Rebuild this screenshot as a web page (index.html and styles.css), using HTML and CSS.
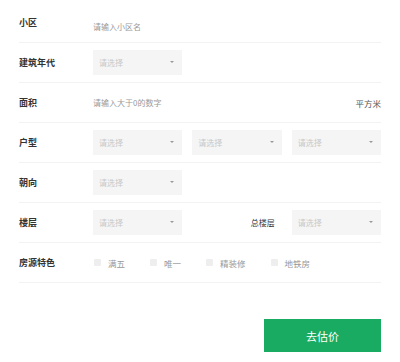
FILE: index.html
```html
<!DOCTYPE html>
<html lang="zh-CN">
<head>
    <meta charset="UTF-8">
    <meta name="viewport" content="width=device-width, initial-scale=1.0">
    <title>估价</title>
    <link rel="stylesheet" href="styles.css">
</head>
<body>
    <form class="estimate" id="estimateForm">
        <div class="row">
            <label class="label">小区</label>
            <div class="field">
                <input class="text-input" type="text" placeholder="请输入小区名">
            </div>
        </div>

        <div class="row">
            <label class="label">建筑年代</label>
            <div class="field grid3">
                <div class="select">请选择<span class="arrow"></span></div>
            </div>
        </div>

        <div class="row">
            <label class="label">面积</label>
            <div class="field field-unit">
                <input class="text-input" type="text" placeholder="请输入大于0的数字">
                <span class="unit">平方米</span>
            </div>
        </div>

        <div class="row">
            <label class="label">户型</label>
            <div class="field grid3">
                <div class="select">请选择<span class="arrow"></span></div>
                <div class="select">请选择<span class="arrow"></span></div>
                <div class="select">请选择<span class="arrow"></span></div>
            </div>
        </div>

        <div class="row">
            <label class="label">朝向</label>
            <div class="field grid3">
                <div class="select">请选择<span class="arrow"></span></div>
            </div>
        </div>

        <div class="row">
            <label class="label">楼层</label>
            <div class="field grid3">
                <div class="select">请选择<span class="arrow"></span></div>
                <span class="sub-label">总楼层</span>
                <div class="select">请选择<span class="arrow"></span></div>
            </div>
        </div>

        <div class="row">
            <label class="label">房源特色</label>
            <div class="field checks">
                <label class="check"><span class="box"></span>满五</label>
                <label class="check"><span class="box"></span>唯一</label>
                <label class="check"><span class="box"></span>精装修</label>
                <label class="check"><span class="box"></span>地铁房</label>
            </div>
        </div>

        <div class="actions">
            <button type="submit" class="submit">去估价</button>
        </div>
    </form>
</body>
</html>
```

FILE: styles.css
```css
body {
    margin: 0;
    padding: 0;
    background-color: #ffffff;
    font-family: 'Noto Sans CJK SC', 'Noto Sans', sans-serif;
    color: #333;
}

.estimate {
    padding: 3px 19px 0;
}

.row {
    display: flex;
    align-items: center;
    height: 39px;
    border-bottom: 1px solid #f2f2f2;
}

.label {
    width: 74px;
    flex-shrink: 0;
    font-size: 9px;
    font-weight: bold;
    color: #333;
}

.field {
    flex: 1;
}

.text-input {
    border: none;
    outline: none;
    padding: 0;
    width: 160px;
    font-family: inherit;
    font-size: 8px;
    color: #333;
    background: transparent;
}

.text-input::placeholder {
    color: #999;
}

.field-unit {
    display: flex;
    align-items: center;
    justify-content: space-between;
}

.unit {
    font-size: 8.5px;
    color: #555;
}

.grid3 {
    display: grid;
    grid-template-columns: 1fr 1fr 1fr;
    column-gap: 10px;
    align-items: center;
}

.select {
    position: relative;
    height: 25px;
    line-height: 25px;
    padding-left: 6px;
    background-color: #f5f5f5;
    font-size: 8px;
    color: #c8c8c8;
}

.arrow {
    position: absolute;
    right: 8px;
    top: 11px;
    width: 0;
    height: 0;
    border-left: 2px solid transparent;
    border-right: 2px solid transparent;
    border-top: 2px solid #999;
}

.sub-label {
    text-align: right;
    padding-right: 7px;
    font-size: 8px;
    color: #333;
}

.checks {
    display: flex;
    align-items: center;
    gap: 24px;
}

.check {
    display: flex;
    align-items: center;
    font-size: 8.5px;
    color: #999;
}

.box {
    width: 7px;
    height: 7px;
    margin: 0 7px 0 1px;
    background-color: #eeeeee;
    border-radius: 1px;
}

.actions {
    display: flex;
    justify-content: flex-end;
    margin-top: 36px;
}

.submit {
    width: 117px;
    height: 33px;
    border: none;
    background-color: #1aab62;
    color: #ffffff;
    font-family: inherit;
    font-size: 11px;
    cursor: pointer;
}
```
